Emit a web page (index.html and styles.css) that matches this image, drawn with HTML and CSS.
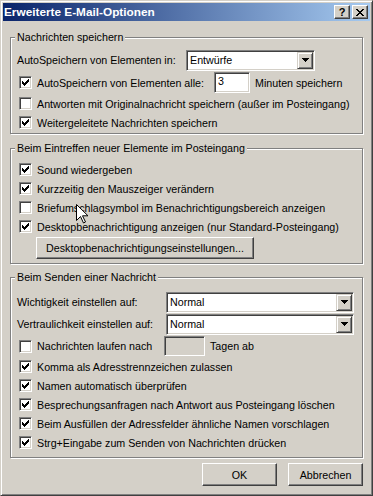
FILE: index.html
```html
<!DOCTYPE html>
<html lang="de">
<head>
    <meta charset="UTF-8">
    <title>Erweiterte E-Mail-Optionen</title>
    <link rel="stylesheet" href="styles.css">
</head>
<body>
<div class="window">
    <div class="caption">
        <span class="caption-title">Erweiterte E-Mail-Optionen</span>
        <span class="caption-btns">
            <span class="cbtn">?</span>
            <span class="cbtn"><svg width="8" height="7" viewBox="0 0 8 7"><path d="M0 0h2v1h-2zM6 0h2v1h-2zM1 1h2v1h-2zM5 1h2v1h-2zM2 2h4v1h-4zM3 3h2v1h-2zM2 4h4v1h-4zM1 5h2v1h-2zM5 5h2v1h-2zM0 6h2v1h-2zM6 6h2v1h-2z"/></svg></span>
        </span>
    </div>

    <div class="content">
        <div class="group g1">
            <div class="legend">Nachrichten speichern</div>
            <div class="row tall">
                <span class="lbl lbl-save">AutoSpeichern von Elementen in:</span>
                <span class="combo combo-save"><span class="combo-text">Entwürfe</span><span class="drop"><svg width="7" height="4" viewBox="0 0 7 4"><path d="M0 0h7v1h-1v1h-1v1h-1v1h-1v-1h-1v-1h-1v-1h-1z"/></svg></span></span>
            </div>
            <div class="row tall2">
                <span class="check on"><svg width="7" height="7" viewBox="0 0 7 7"><path d="M0 2h1v1h1v1h1v-1h1v-1h1v-1h1v-1h1v3h-1v1h-1v1h-1v1h-1v1h-1v-1h-1v-1h-1z"/></svg></span>
                <span class="lbl lbl-alle">AutoSpeichern von Elementen alle:</span>
                <span class="field field-min">3</span>
                <span class="lbl after">Minuten speichern</span>
            </div>
            <div class="row">
                <span class="check"></span>
                <span class="lbl">Antworten mit Originalnachricht speichern (außer im Posteingang)</span>
            </div>
            <div class="row">
                <span class="check on"><svg width="7" height="7" viewBox="0 0 7 7"><path d="M0 2h1v1h1v1h1v-1h1v-1h1v-1h1v-1h1v3h-1v1h-1v1h-1v1h-1v1h-1v-1h-1v-1h-1z"/></svg></span>
                <span class="lbl">Weitergeleitete Nachrichten speichern</span>
            </div>
        </div>

        <div class="group g2">
            <div class="legend">Beim Eintreffen neuer Elemente im Posteingang</div>
            <div class="row">
                <span class="check on"><svg width="7" height="7" viewBox="0 0 7 7"><path d="M0 2h1v1h1v1h1v-1h1v-1h1v-1h1v-1h1v3h-1v1h-1v1h-1v1h-1v1h-1v-1h-1v-1h-1z"/></svg></span>
                <span class="lbl">Sound wiedergeben</span>
            </div>
            <div class="row">
                <span class="check on"><svg width="7" height="7" viewBox="0 0 7 7"><path d="M0 2h1v1h1v1h1v-1h1v-1h1v-1h1v-1h1v3h-1v1h-1v1h-1v1h-1v1h-1v-1h-1v-1h-1z"/></svg></span>
                <span class="lbl">Kurzzeitig den Mauszeiger verändern</span>
            </div>
            <div class="row">
                <span class="check"></span>
                <span class="lbl">Briefumschlagsymbol im Benachrichtigungsbereich anzeigen</span>
            </div>
            <div class="row">
                <span class="check on"><svg width="7" height="7" viewBox="0 0 7 7"><path d="M0 2h1v1h1v1h1v-1h1v-1h1v-1h1v-1h1v3h-1v1h-1v1h-1v1h-1v1h-1v-1h-1v-1h-1z"/></svg></span>
                <span class="lbl">Desktopbenachrichtigung anzeigen (nur Standard-Posteingang)</span>
            </div>
            <div class="btn btn-desktop">Desktopbenachrichtigungseinstellungen...</div>
        </div>

        <div class="group g3">
            <div class="legend">Beim Senden einer Nachricht</div>
            <div class="row tall">
                <span class="lbl lbl-send">Wichtigkeit einstellen auf:</span>
                <span class="combo combo-send"><span class="combo-text">Normal</span><span class="drop"><svg width="7" height="4" viewBox="0 0 7 4"><path d="M0 0h7v1h-1v1h-1v1h-1v1h-1v-1h-1v-1h-1v-1h-1z"/></svg></span></span>
            </div>
            <div class="row tall">
                <span class="lbl lbl-send">Vertraulichkeit einstellen auf:</span>
                <span class="combo combo-send"><span class="combo-text">Normal</span><span class="drop"><svg width="7" height="4" viewBox="0 0 7 4"><path d="M0 0h7v1h-1v1h-1v1h-1v1h-1v-1h-1v-1h-1v-1h-1z"/></svg></span></span>
            </div>
            <div class="row tall">
                <span class="check"></span>
                <span class="lbl lbl-expire">Nachrichten laufen nach</span>
                <span class="field field-days disabled"></span>
                <span class="lbl after">Tagen ab</span>
            </div>
            <div class="row">
                <span class="check on"><svg width="7" height="7" viewBox="0 0 7 7"><path d="M0 2h1v1h1v1h1v-1h1v-1h1v-1h1v-1h1v3h-1v1h-1v1h-1v1h-1v1h-1v-1h-1v-1h-1z"/></svg></span>
                <span class="lbl">Komma als Adresstrennzeichen zulassen</span>
            </div>
            <div class="row">
                <span class="check on"><svg width="7" height="7" viewBox="0 0 7 7"><path d="M0 2h1v1h1v1h1v-1h1v-1h1v-1h1v-1h1v3h-1v1h-1v1h-1v1h-1v1h-1v-1h-1v-1h-1z"/></svg></span>
                <span class="lbl">Namen automatisch überprüfen</span>
            </div>
            <div class="row">
                <span class="check on"><svg width="7" height="7" viewBox="0 0 7 7"><path d="M0 2h1v1h1v1h1v-1h1v-1h1v-1h1v-1h1v3h-1v1h-1v1h-1v1h-1v1h-1v-1h-1v-1h-1z"/></svg></span>
                <span class="lbl">Besprechungsanfragen nach Antwort aus Posteingang löschen</span>
            </div>
            <div class="row">
                <span class="check on"><svg width="7" height="7" viewBox="0 0 7 7"><path d="M0 2h1v1h1v1h1v-1h1v-1h1v-1h1v-1h1v3h-1v1h-1v1h-1v1h-1v1h-1v-1h-1v-1h-1z"/></svg></span>
                <span class="lbl">Beim Ausfüllen der Adressfelder ähnliche Namen vorschlagen</span>
            </div>
            <div class="row">
                <span class="check on"><svg width="7" height="7" viewBox="0 0 7 7"><path d="M0 2h1v1h1v1h1v-1h1v-1h1v-1h1v-1h1v3h-1v1h-1v1h-1v1h-1v1h-1v-1h-1v-1h-1z"/></svg></span>
                <span class="lbl">Strg+Eingabe zum Senden von Nachrichten drücken</span>
            </div>
        </div>

        <div class="button-row">
            <div class="btn btn-dlg">OK</div>
            <div class="btn btn-dlg">Abbrechen</div>
        </div>
    </div>

    <svg class="cursor" width="12" height="20" viewBox="0 0 12 20"><path d="M0.5 0.5v16l4-4 3 6.5 2-1-3-6.2h5.5z" fill="#fff" stroke="#000"/></svg>
</div>
</body>
</html>
```

FILE: styles.css
```css
body {
    margin: 0;
    font-family: "Liberation Sans", Arial, sans-serif;
    font-size: 10.7px;
    color: #000;
    background: #d4d0c8;
}
.window {
    position: relative;
    width: 373px;
    height: 496px;
    box-sizing: border-box;
    border: 1px solid;
    border-color: #d4d0c8 #404040 #404040 #d4d0c8;
    box-shadow: inset 1px 1px #fff, inset -1px -1px #808080;
    padding: 2px;
    background: #d4d0c8;
}
.caption {
    height: 18px;
    display: flex;
    align-items: center;
    justify-content: space-between;
    padding: 0 2px 0 1px;
    background: linear-gradient(to right, #0a246a, #a6caf0);
}
.caption-title {
    color: #fff;
    font-weight: bold;
    font-size: 11.8px;
}
.caption-btns {
    display: flex;
    gap: 2px;
}
.cbtn {
    width: 16px;
    height: 14px;
    box-sizing: border-box;
    display: flex;
    align-items: center;
    justify-content: center;
    font-weight: bold;
    font-size: 11px;
    line-height: 12px;
    background: #d4d0c8;
    border: 1px solid;
    border-color: #fff #404040 #404040 #fff;
    box-shadow: inset -1px -1px #808080;
}
.content {
    padding: 16px 7px 0 7px;
}
.group {
    border: 1px solid #808080;
    box-shadow: inset 1px 1px #fff, 1px 1px #fff;
    padding: 0 8px 0 6px;
}
.legend {
    display: table;
    height: 13px;
    line-height: 13px;
    margin: -7px 0 5px -2px;
    padding: 0 2px;
    background: #d4d0c8;
}
.g1 {
    padding-bottom: 1px;
}
.g2 {
    margin-top: 14px;
    padding-bottom: 4px;
}
.g3 {
    margin-top: 13px;
    padding-bottom: 5px;
}
.g3 .legend {
    margin-bottom: 7px;
}
.row {
    display: flex;
    align-items: center;
    height: 19px;
    white-space: nowrap;
}
.row.tall {
    height: 22px;
}
.row.tall2 {
    height: 23px;
}
.check {
    flex: none;
    width: 13px;
    height: 13px;
    box-sizing: border-box;
    margin: 0 5px 0 2px;
    display: flex;
    align-items: center;
    justify-content: center;
    background: #fff;
    border: 1px solid;
    border-color: #808080 #fff #fff #808080;
    box-shadow: inset 1px 1px #404040, inset -1px -1px #d4d0c8;
}
.check svg {
    display: block;
}
.lbl-save {
    width: 169px;
}
.lbl-alle {
    width: 177px;
}
.lbl-send {
    width: 149px;
}
.lbl-expire {
    width: 127px;
}
.lbl.after {
    margin-left: 5px;
}
.combo {
    display: flex;
    height: 21px;
    box-sizing: border-box;
    padding: 1px;
    background: #fff;
    border: 1px solid;
    border-color: #808080 #fff #fff #808080;
    box-shadow: inset 1px 1px #404040, inset -1px -1px #d4d0c8;
}
.combo-save {
    width: 129px;
}
.combo-send {
    width: 188px;
}
.combo-text {
    flex: 1;
    padding-left: 2px;
    line-height: 17px;
}
.drop {
    width: 16px;
    height: 17px;
    box-sizing: border-box;
    display: flex;
    align-items: center;
    justify-content: center;
    background: #d4d0c8;
    border: 1px solid;
    border-color: #d4d0c8 #404040 #404040 #d4d0c8;
    box-shadow: inset 1px 1px #fff, inset -1px -1px #808080;
}
.field {
    height: 21px;
    box-sizing: border-box;
    padding: 0 3px;
    line-height: 17px;
    background: #fff;
    border: 1px solid;
    border-color: #808080 #fff #fff #808080;
    box-shadow: inset 1px 1px #404040, inset -1px -1px #d4d0c8;
}
.field-min {
    width: 36px;
}
.field-days {
    width: 41px;
    height: 20px;
}
.field.disabled {
    background: #d4d0c8;
}
.btn {
    height: 23px;
    box-sizing: border-box;
    display: flex;
    align-items: center;
    justify-content: center;
    background: #d4d0c8;
    border: 1px solid;
    border-color: #fff #404040 #404040 #fff;
    box-shadow: inset -1px -1px #808080;
}
.btn-desktop {
    width: 218px;
    height: 22px;
    margin: 1px 0 0 19px;
}
.button-row {
    display: flex;
    justify-content: flex-end;
    gap: 11px;
    margin-top: 5px;
}
.btn-dlg {
    width: 75px;
}
.cursor {
    position: absolute;
    left: 75px;
    top: 203px;
}
```
